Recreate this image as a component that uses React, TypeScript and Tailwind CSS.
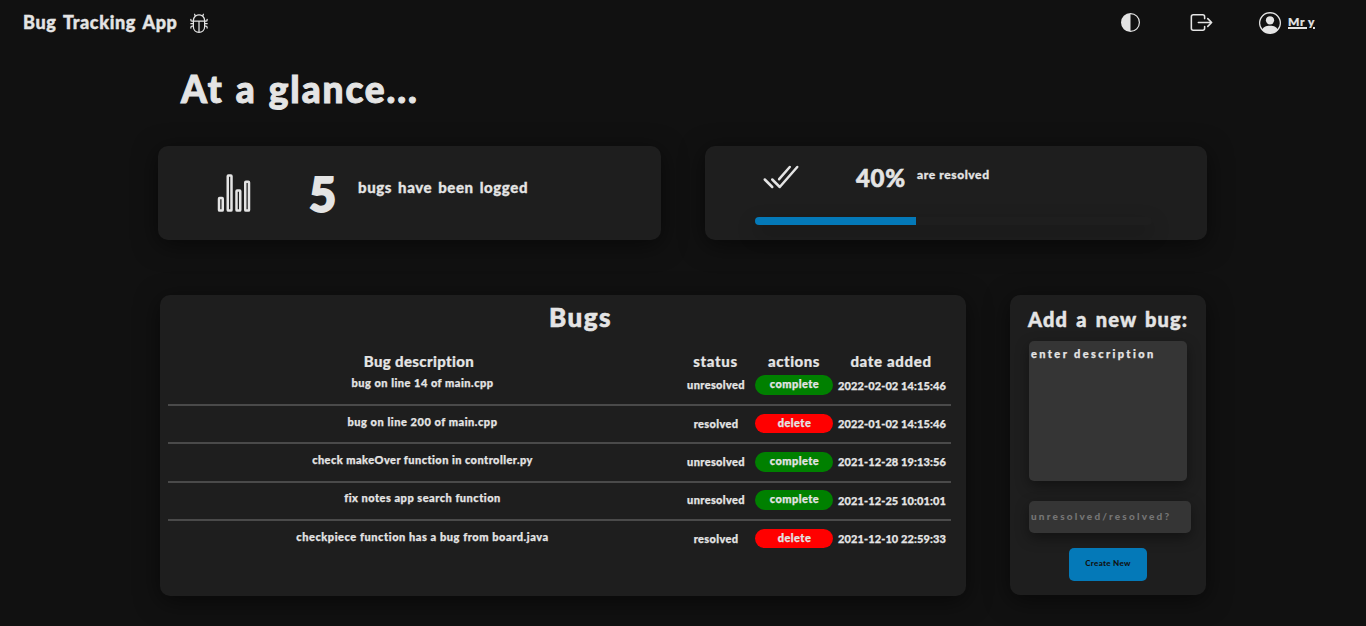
import { BsBug, BsCircleHalf, BsPersonCircle } from "react-icons/bs";
import { IoExitOutline, IoStatsChartOutline, IoCheckmarkDoneOutline } from "react-icons/io5";

type Bug = { description: string; track: string; status: "resolved" | "unresolved"; date: string };

const bugs: Bug[] = [
  { description: "bug on line 14 of main.cpp", track: "tracking-[0.5px]", status: "unresolved", date: "2022-02-02 14:15:46" },
  { description: "bug on line 200 of main.cpp", track: "tracking-[0.54px]", status: "resolved", date: "2022-01-02 14:15:46" },
  { description: "check makeOver function in controller.py", track: "tracking-[0.45px]", status: "unresolved", date: "2021-12-28 19:13:56" },
  { description: "fix notes app search function", track: "tracking-[0.5px]", status: "unresolved", date: "2021-12-25 10:01:01" },
  { description: "checkpiece function has a bug from board.java", track: "tracking-[0.56px]", status: "resolved", date: "2021-12-10 22:59:33" },
];

const card = "rounded-[10px] bg-[#1e1e1e] shadow-[0_5px_24px_rgba(0,0,0,0.55)]";
const field = "block resize-none rounded-[5px] bg-[#353535] outline-none shadow-[0_5px_14px_rgba(0,0,0,0.4)]";

function Header() {
  return (
    <header className="flex h-[45px] items-center pl-[23px]">
      <span className="w-[154px] whitespace-nowrap pb-[2px] text-[18px] font-black leading-none tracking-[0.65px] [word-spacing:2px] [-webkit-text-stroke:0.4px]">
        Bug Tracking App
      </span>
      <BsBug className="ml-[12px] size-[20px]" />
      <BsCircleHalf className="ml-[912px] size-[19px]" />
      <IoExitOutline className="ml-[49px] size-[25px]" />
      <BsPersonCircle className="ml-[45px] size-[22px]" />
      <span className="ml-[7px] whitespace-nowrap pb-[2px] text-[12px] font-black tracking-[0.6px] underline decoration-2 [-webkit-text-stroke:0.2px]">
        Mr y
      </span>
    </header>
  );
}

function Stats() {
  return (
    <section className="ml-[158px] mt-[31px] flex gap-[44px]">
      <div className={`flex h-[94px] w-[503px] ${card}`}>
        <IoStatsChartOutline className="ml-[56px] mt-[27px] size-[40px]" />
        <span className="ml-[55px] mt-[23px] w-[28px] text-[47px] leading-[50px] [-webkit-text-stroke:1.8px]">5</span>
        <span className="ml-[21px] mt-[31px] text-[15px] leading-[20px] tracking-[0.6px] [word-spacing:1.8px] [-webkit-text-stroke:0.3px]">
          bugs have been logged
        </span>
      </div>
      <div className={`h-[94px] w-[502px] ${card}`}>
        <div className="flex h-[71px]">
          <IoCheckmarkDoneOutline className="ml-[56px] mt-[11px] size-[40px]" />
          <span className="ml-[55px] mt-[17px] w-[50px] text-[24px] leading-[30px] tracking-[0.7px] [-webkit-text-stroke:0.6px]">40%</span>
          <span className="ml-[11px] mt-[19px] text-[12px] leading-[20px] tracking-[0.6px] [-webkit-text-stroke:0.3px]">are resolved</span>
        </div>
        <div className="ml-[50px] h-[8px] w-[397px] rounded bg-[#1e1e1e] shadow-[0_8px_20px_rgba(0,0,0,0.3)]">
          <div className="h-full w-[161px] rounded-l bg-[#0479b8]" />
        </div>
      </div>
    </section>
  );
}

const columns = "grid w-[783px] grid-cols-[508px_79px_78px_118px] text-center";

function BugTable() {
  return (
    <section className={`h-[301px] w-[806px] pl-[8px] ${card}`}>
      <h2 className="ml-[381px] w-max pt-[5px] text-[26px] leading-[34px] tracking-[1.5px] [-webkit-text-stroke:0.6px]">Bugs</h2>
      <div className={`mt-[17px] h-[16.67px] text-[15px] leading-[20px] [-webkit-text-stroke:0.2px] ${columns}`}>
        <span className="pr-[6px] tracking-[0.35px]">Bug description</span>
        <span className="tracking-[0.6px]">status</span>
        <span className="tracking-[0.5px]">actions</span>
        <span className="pr-[2px] tracking-[0.65px]">date added</span>
      </div>
      {bugs.map((b) => (
        <div
          key={b.date}
          className={`h-[38.33px] border-b-2 border-[#4a4a4a] text-[11px] leading-[16px] last:border-transparent [-webkit-text-stroke:0.25px] ${columns}`}
        >
          <span className={`pl-[1px] pt-[7.6px] ${b.track}`}>{b.description}</span>
          <span className="pl-[1px] pt-[9.6px] tracking-[0.35px]">{b.status}</span>
          {b.status === "resolved" ? (
            <button className="mt-[7.8px] h-[19.6px] rounded-full bg-[#ff0000] pb-[2px] pl-[1px] tracking-[0.45px]">delete</button>
          ) : (
            <button className="mt-[7.8px] h-[19.6px] rounded-full bg-[#008000] pb-[2px] pl-[1px] tracking-[0.45px]">complete</button>
          )}
          <span className="whitespace-nowrap pt-[10px] tracking-[0.1px]">{b.date}</span>
        </div>
      ))}
    </section>
  );
}

function NewBug() {
  return (
    <section className={`h-[300px] w-[196px] ${card}`}>
      <h2 className="ml-[18px] w-max pt-[9px] text-[20px] leading-[30px] tracking-[1.1px] [word-spacing:2.4px] [-webkit-text-stroke:0.5px]">
        Add a new bug:
      </h2>
      <textarea
        className={`ml-[19px] mt-[7px] h-[140px] w-[158px] px-[2px] pt-[5px] text-[11px] leading-[16px] tracking-[2.4px] [-webkit-text-stroke:0.25px] ${field}`}
        defaultValue="enter description"
      />
      <input
        className={`ml-[19px] mt-[20px] h-[32px] w-[162px] px-[2px] pb-[3px] text-[10px] tracking-[2.2px] placeholder:text-[#757575] ${field}`}
        placeholder="unresolved/resolved?"
      />
      <button className="ml-[59px] mt-[15px] block h-[33px] w-[78px] rounded-[5px] bg-[#0479b8] pb-[3px] text-[8px] tracking-[0.3px] text-[#111]">
        Create New
      </button>
    </section>
  );
}

export default function App() {
  return (
    <div className="h-[626px] overflow-hidden bg-[#111] font-['Lato',sans-serif] font-black text-[#e4e4e4]">
      <Header />
      <h1 className="ml-[181px] mt-[20px] w-max text-[37px] leading-[48px] tracking-[1.9px] [word-spacing:1.5px] [-webkit-text-stroke:1px]">At a glance...</h1>
      <div className="h-[2px]" />
      <Stats />
      <main className="ml-[160px] mt-[55px] flex gap-[44px]">
        <BugTable />
        <NewBug />
      </main>
    </div>
  );
}
